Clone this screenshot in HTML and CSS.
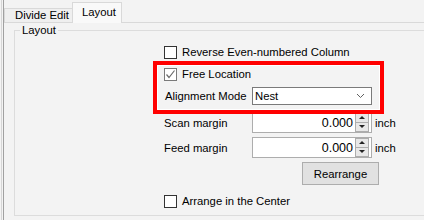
FILE: index.html
```html
<!DOCTYPE html>
<html lang="en">
<head>
  <meta charset="UTF-8" />
  <title>Layout</title>
  <link rel="stylesheet" href="styles.css">
</head>
<body>
  <div class="outer">
    <div class="ctl">
      <div class="tabs">
        <div class="tab">Divide Edit</div>
        <div class="tab active">Layout</div>
      </div>

      <div class="page">
        <fieldset class="group">
          <legend>Layout</legend>

          <div class="row check-row first">
            <span class="box"></span>
            <span>Reverse Even-numbered Column</span>
          </div>

          <div class="mark">
            <div class="row check-row">
              <span class="box checked">
                <svg width="11" height="11" viewBox="0 0 11 11"><path d="M1.5 5.5 L4 8.5 L9.5 1.5" fill="none" stroke="#6b6b6b" stroke-width="1.2"/></svg>
              </span>
              <span>Free Location</span>
            </div>
            <div class="row field-row">
              <span class="lbl lbl-inner">Alignment Mode</span>
              <div class="select">
                <span>Nest</span>
                <svg class="chev" width="9" height="6" viewBox="0 0 9 6"><path d="M1 1 L4.5 4.5 L8 1" fill="none" stroke="#606060" stroke-width="1"/></svg>
              </div>
            </div>
          </div>

          <div class="row field-row num-row scan">
            <span class="lbl">Scan margin</span>
            <div class="num">
              <span class="val">0.000</span>
              <div class="spin">
                <span class="up"></span>
                <span class="down"></span>
              </div>
            </div>
            <span class="unit">inch</span>
          </div>

          <div class="row field-row num-row feed">
            <span class="lbl">Feed margin</span>
            <div class="num">
              <span class="val">0.000</span>
              <div class="spin">
                <span class="up"></span>
                <span class="down"></span>
              </div>
            </div>
            <span class="unit">inch</span>
          </div>

          <div class="row btn-row">
            <button>Rearrange</button>
          </div>

          <div class="row check-row last">
            <span class="box"></span>
            <span>Arrange in the Center</span>
          </div>
        </fieldset>
      </div>
    </div>
  </div>
</body>
</html>
```

FILE: styles.css
```css
body {
  margin: 0;
  padding: 0;
  width: 424px;
  height: 220px;
  overflow: hidden;
  background-color: #f3f3f3;
  font-family: "Liberation Sans", Arial, sans-serif;
  font-size: 11.3px;
  line-height: 14px;
  color: #000;
}

.outer {
  margin-left: 1px;
  padding-left: 1px;
  border-left: 1px solid #d6d6d6;
  height: 220px;
}

.ctl {
  border-left: 1px solid #a0a0a0;
  height: 220px;
  overflow: hidden;
}

.tabs {
  display: flex;
  align-items: flex-end;
  height: 22px;
}

.tab {
  box-sizing: border-box;
  height: 14px;
  width: 69px;
  border: 1px solid #d9d9d9;
  border-bottom: none;
  background-color: #efefef;
  line-height: 13px;
  padding-left: 10px;
  white-space: nowrap;
}

.tab.active {
  position: relative;
  z-index: 1;
  height: 21px;
  width: 50px;
  margin-left: -1px;
  margin-bottom: -1px;
  background-color: #f9f9f9;
  line-height: 18px;
  padding-left: 9px;
}

.page {
  border-top: 1px solid #d9d9d9;
}

.group {
  margin: 0 -3px 0 10px;
  padding: 0 0 6px 5px;
  border: 1px solid #dcdcdc;
  min-inline-size: 0;
}

.group legend {
  padding: 0 2px;
  line-height: 14px;
}

.row {
  display: flex;
  align-items: center;
  margin-left: 144px;
  white-space: nowrap;
}

.check-row {
  height: 16px;
}

.first {
  margin-top: 7px;
}

.box {
  box-sizing: border-box;
  width: 13px;
  height: 13px;
  border: 1px solid #333;
  background-color: #fff;
  margin-right: 5px;
  display: flex;
  align-items: center;
  justify-content: center;
}

.box.checked {
  border-color: #7a7a7a;
}

.mark {
  position: relative;
  z-index: 2;
  box-sizing: border-box;
  width: 231px;
  margin: 1px 0 0 133px;
  padding: 1px 0 5px 7px;
  border: 4px solid #ff0000;
  box-shadow: inset 0 0 0 1px #ffffff;
}

.mark .row {
  margin-left: 0;
}

.field-row {
  height: 18px;
  margin-top: 5px;
}

.lbl {
  width: 88px;
  flex-shrink: 0;
}

.lbl-inner {
  box-sizing: border-box;
  width: 88px;
  padding-left: 1px;
}

.select {
  box-sizing: border-box;
  width: 120px;
  height: 18px;
  border: 1px solid #7a7a7a;
  background-color: #fff;
  display: flex;
  align-items: center;
  justify-content: space-between;
  padding: 0 6px 0 2px;
}

.num-row {
  height: 21px;
}

.scan {
  margin-top: -2px;
}

.feed {
  margin-top: 4px;
}

.num {
  box-sizing: border-box;
  width: 120px;
  height: 21px;
  border: 1px solid #adadad;
  background-color: #fff;
  display: flex;
  align-items: center;
  justify-content: flex-end;
  padding-right: 2px;
}

.val {
  font-size: 12.5px;
  margin-right: 2px;
}

.spin {
  display: flex;
  flex-direction: column;
  width: 14px;
  height: 19px;
}

.spin span {
  flex: 1;
  box-sizing: border-box;
  border: 1px solid #adadad;
  background-color: #e8e8e8;
  position: relative;
}

.spin .up {
  border-bottom: none;
}

.spin span::after {
  content: "";
  position: absolute;
  left: 3px;
  top: 2px;
  border-left: 3px solid transparent;
  border-right: 3px solid transparent;
}

.spin .up::after {
  border-bottom: 3px solid #222;
}

.spin .down::after {
  border-top: 3px solid #222;
}

.unit {
  margin-left: 3px;
}

.btn-row {
  margin-left: 282px;
  margin-top: 4px;
}

button {
  box-sizing: border-box;
  width: 77px;
  height: 23px;
  background-color: #e1e1e1;
  border: 1px solid #adadad;
  font-family: inherit;
  font-size: 11.3px;
  padding: 0;
  color: #000;
}

.last {
  margin-top: 8px;
}
```
